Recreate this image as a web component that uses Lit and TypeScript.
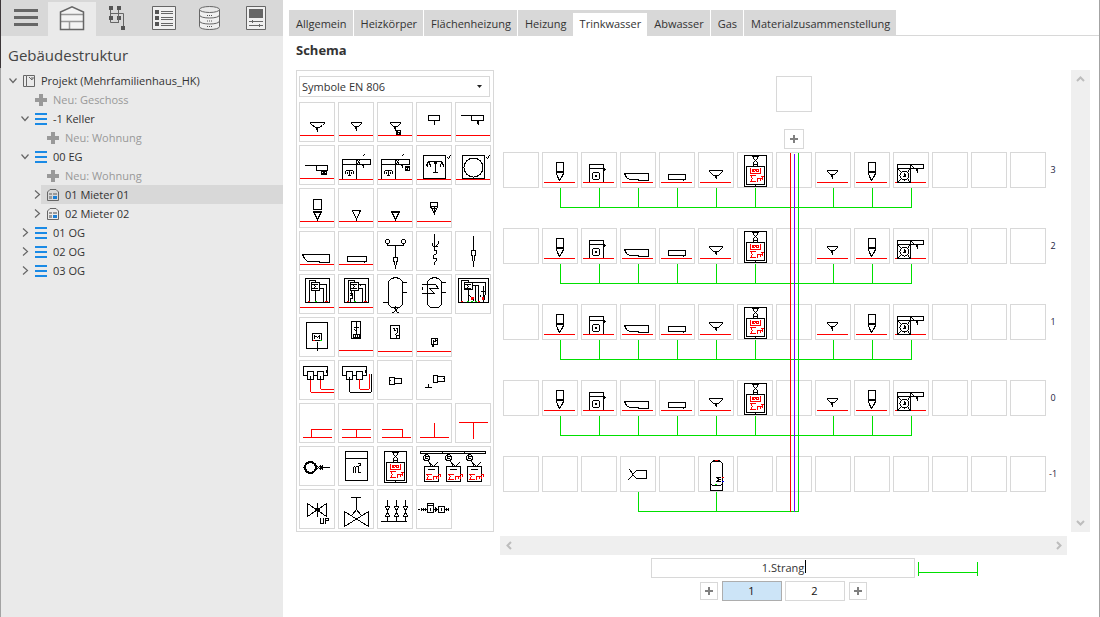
import { LitElement, html, css, svg, nothing } from "lit";
import type { SVGTemplateResult } from "lit";
import { customElement, state } from "lit/decorators.js";
import { classMap } from "lit/directives/class-map.js";

type Art = SVGTemplateResult | SVGTemplateResult[];

/* Line helpers: one-pixel strokes on a cell-sized grid. */
const k = (d: string) => svg`<path class="k" d=${d}></path>`;
const kk = (d: string) => svg`<path class="k bold" transform="translate(-.5 -.5)" d=${d}></path>`;
const r = (d: string) => svg`<path class="r" d=${d}></path>`;
const g = (d: string) => svg`<path class="g" d=${d}></path>`;
const b = (d: string) => svg`<path class="b" d=${d}></path>`;
const move = (x: number, y: number, art: Art) => svg`<g transform="translate(${x} ${y})">${art}</g>`;

const floor = r("M1 33H34");
const floorLow = r("M1 34H34");
const base = r("M2 30H32");

const basin = [k("M11 20H25M11 20V21L13 23L15 24L16 25H20L21 24L23 23L25 21V20M18 25V29M17 25V27")];
const basinSmall = [k("M13 20H23M13 20V21L14 22L16 24H20L22 22L23 21V20M18 24V28M17 25V26")];
const tub = k("M3 23H30V31H20V30H8L5 27L3 23");
const tray = k("M9 25H28V30H9ZM26 30V31");
const scale = k("M7 26L8 25H14L15 26M11 25V30M7 27V28M15 27V28M9 27V28M13 27V28M10 30H12");
const sigma = k("M13 10H18M14 10L16 12L14 14M13 14H18");
const sumRed = r("M6 28H1L3 30L1 33H6M8 33V30H11V32M11 30H13V32M13 28H15V30");

const meter: Art = [
  k("M7 5H29V36H7Z"),
  k("M9 16H27V34H9Z"),
  k("M15 6H21M16 8L20 12M20 8L16 12M16 6V8M20 6V8M16 12V15M20 12V15M16 14H20M18 34V36"),
  r("M13 18V23H23V18M15 19H21M15 21H17M19 21H21M15 20H16M18 20H19M21 20H21"),
  r("M18 25H13L15 28L13 31H18M20 31V28H23V30M23 28H24M25 26V29M24 26H26"),
];

const heatBox = [
  k("M6 4H30V28H6Z"),
  k("M12 8H20V16H12Z"),
  sigma,
  k("M10 28V6H16V8M16 16V28M20 10H27V28M20 14H24V28"),
  r("M9 27H10M26 27H28"),
  g("M16 27H17"),
];

const waterUnit = [
  svg`<circle class="k" cx="10" cy="11" r="3"></circle>`,
  k("M9 9V12M10 10H12M9 12H11M8 14H11M11 14L16 19M13 17L15 20M21 16L17 20M8 20H22V35H8ZM12 23H18"),
  move(9, 0, sumRed),
];

const ART: Record<string, Art> = {
  basin: [basin, floor].flat(),
  basinSmall: [basinSmall, floor].flat(),
  basinHeater: [...basinSmall, k("M19 28H23V32H19ZM20 29V32M20 32H23M22 30V31M19 30H21"), floor],
  sinkBox: [k("M12 13H23V18H12ZM18 18V22"), floor],
  sinkDrain: [k("M6 13H28V18H16V13M23 18V22M22 18V21"), floor],
  sinkHeater: [k("M6 20H28V25H17V20M22 25V29M22 26H27M23 28H27M24 27H25M27 25V29M22 29H27"), floor],
  kitchenScale: [k("M4 14H32V19H4ZM4 19V34M18 14V34M19 15L22 19M21 15L19 18M25 10V10M26 9H26M25 20V22M24 19V20"), scale, floorLow],
  kitchenScaleHeater: [k("M4 14H32V19H4ZM4 19V34M18 14V34M19 15L22 19M21 15L19 18M25 10V10M26 9H26M25 20V22M24 19V20M28 21H32V25H28ZM28 22H32M28 24H30M30 23V24"), scale, floorLow],
  dishwasher: [k("M7 10H29V33H7ZM13 16H25M19 16V27M18 17V18M20 17V18M31 12L32 13L34 10M12 16L10 20M13 17L14 21M25 16L24 21M26 17L27 21M11 19V21M17 27H21"), floorLow],
  washer: [k("M7 10H29V33H7ZM31 12L32 13L34 10"), svg`<circle class="k" cx="18" cy="22" r="9.5"></circle>`, floorLow],
  wc: [k("M14 11H22V21H14ZM14 23H22L18 31ZM15 24H21"), floor],
  cone: [k("M14 22H22L18 31Z"), floor],
  coneSolid: [k("M14 23H22L18 31ZM14 24H22"), floor],
  urinal: [k("M14 14H21V18H14ZM14 18L18 25L21 18M16 20H20M18 18V23"), floor],
  tub: [tub, floor],
  tray: [tray, floor],
  mixer: [svg`<circle class="k" cx="10" cy="10" r="2"></circle>`, svg`<circle class="k" cx="26" cy="10" r="2"></circle>`, k("M10 12V14H26V12M18 14V26M16 26H20V29L19 31V33M16 26V29L17 31V33M18 34V37")],
  hose: [k("M18 3V14M16 12V14L18 16L22 12M18 15V19H20V22L17 24V27H20V29L18 31V33M22 10V12M20 15H21")],
  lance: [k("M18 5V19M16 19H20V23L19 25V29M16 19V23L17 25V29M18 30V35")],
  heatStation: [...heatBox, floor],
  heatStationPump: [...heatBox, k("M13 16V20M12 19H14V24H12V28M12 21H13M22 10V11"), floor],
  tank: [k("M11 7L14 4H16V3H20V4H22L25 7V30L22 33H20M16 33H14L11 30V7M25 8H29M25 18H29M6 28H11M17 34L20 38M20 34L16 38M16 33H20M18 32V35M15 38H15M21 38H21")],
  tankCoil: [k("M11 7L14 4H16V3H20V4H22L25 7V30L22 33H14L11 30ZM25 8H29M25 18H29M6 10H19L22 14H13L18 19H6M6 13V15")],
  heatStationDouble: [
    k("M3 4H33V28H3ZM9 8H17V15H9Z"),
    move(-3, 0, sigma),
    k("M6 28V6H13V8M17 8H30V17M17 11H23V28M20 11V26M13 16V28M28 12V22M26 17H30V20M28 25V28"),
    svg`<rect class="fr" x="15" y="22" width="3" height="3"></rect><rect class="fr" x="26" y="22" width="3" height="3"></rect>`,
    k("M14 21L15 22M18 25V26M25 21V22M29 21V25"),
    r("M6 27H7M23 27H24"), g("M12 27H13M16 27H17M20 27H21"),
  ],
  boiler: [k("M7 5H28V31H7ZM13 16H22V23H13ZM18 25V33M15 21V18L18 20L20 18V21"), r("M14 23H15"), g("M21 23H22")],
  heaterTall: [k("M13 4H22V21H13ZM18 5V16M16 10H20M16 12L18 14M15 17H21V20H15ZM17 18V19M19 18V19"), floor],
  heaterMid: [k("M13 8H22V21H13ZM16 11H17V13M19 11H20V15L18 17M18 13V13M19 18H22V21H19Z"), floorLow],
  heaterSmall: [k("M15 21H21V27H15ZM16 27V29H17V27M17 23V26M19 22V24M17 25L20 23"), floorLow],
  manifold: [k("M4 6H28V15H24M4 6V15H8M14 15H18M8 11H14V19H8ZM18 11H24V19H18ZM27 10V12M11 16V19M21 16V19"), r("M11 20V31L12 32H34M21 20V28L22 29H34")],
  manifoldLoop: [k("M4 6H28V15H24M4 6V15H8M14 15H18M8 11H14V19H8ZM18 11H24V19H18ZM27 10V12M11 17V31L12 32H32L33 31V14"), r("M21 19V28L22 29H30L31 28V14")],
  outlet: [k("M12 17H17V24H12ZM17 18H24V23H17ZM13 20V20")],
  outletFloor: [k("M17 15H21V22H17ZM21 16H28V21H21ZM27 18V18M9 27H15M12 24V27")],
  pipeRight: [r("M4 34H32M12 34V26H32")],
  pipeBoth: [r("M4 34H32M4 26H32M18 26V34")],
  pipeLeft: [r("M5 34H33M5 26H25V34")],
  teeUp: [r("M4 34H32M18 20V34")],
  teeDown: [r("M4 19H32M18 19V35")],
  pump: [svg`<circle class="k bold" cx="11" cy="21" r="5.500"></circle>`, k("M17 19V23M17 19L21 23M17 23L21 19M21 19V23M21 21H30M22 20V22M23 19V23M4 21H5")],
  volume: [k("M7 5H29V34H7ZM7 12H29M15 26V21M16 20L17 21V26M18 20H20V26M21 26H22M20 17H22V19H21")],
  meter,
  meterGroup: [k("M4 5H69V7H4ZM26 5V7M48 5V7"), ...waterUnit, move(22, 0, waterUnit), move(43, 0, waterUnit)],
  filterValve: [k("M8 14L27 27V14L8 27ZM18 14V27M17 19H20V22M21 29V34H24V29M26 34V29H29V31H26")],
  valve: [k("M13 8H22M18 8V20L14 25M18 20L22 25M6 22L30 37V22L6 37Z")],
  valveGroup: [0, 9, 18].map((x) => move(x, 0, k("M10 11V17M8 17H12L8 27H12ZM10 27V32M9 20H11M9 24H11"))).concat(k("M4 32H29")),
  chain: [k("M2 20H3M5 19V21M7 19V21M9 19V21M5 20H11M11 14H17V23H11ZM11 16H17M14 19V21M17 20H22M19 18V22M20 19V21M22 17H28V23H22ZM25 19V21M28 20H32M30 19V21M32 19V21")],

  cWc: [k("M14 10H21V20H14ZM14 19H21M14 21L15 24L17 28L19 25L21 21"), base],
  cMachine: [base, k("M8 29V12H22V29M8 16H22M22 16L24 17M23 18V18M12 20H17L18 21V26L17 27H12L11 26V21ZM14 23H15V24H14Z")],
  cTub: [k("M4 21H28V28H18V27H9L6 25L4 21"), base],
  cTray: [k("M9 22H26V27H9ZM24 27V28"), base],
  cBasin: [move(-0, -2, k("M11 20H24M11 20V21L13 23L14 24L15 25H20L21 24L22 23L24 21V20M18 25V28M17 26V27")), base],
  cBasinSmall: [move(-1, -2, basinSmall), base],
  cMeter: move(0, -2, meter),
  cWasherTop: [base, k("M4 12H30V16H4ZM4 16V30H17V12M5 17L8 20M16 17L14 20M5 29L8 26M16 29L14 26M18 13L21 16"), svg`<circle class="k" cx="11" cy="23" r="4.500"></circle>`, k("M11 21V24H10M12 22V24M24 16V20M23 17V18")],
  cOutlet: [k("M26 14H16L12 18L16 22H26ZM9 13L12 17V19L8 23")],
  cTank: [k("M12 34V7L14 5H22L24 7V34ZM12 28L15 29H21L24 28M15 4H21M18 21H22M19 22L21 23L19 24M18 25H22"), r("M17 4H19M24 21H25"), b("M24 25H25"), g("M17 28H18")],
};

const artStyles = css`
  .art { display: block; shape-rendering: crispEdges; overflow: visible; }
  .k, .r, .g, .b { fill: none; stroke: #000; stroke-width: 1; stroke-linecap: square; }
  .bold { stroke-width: 2; }
  .r { stroke: #f00; }
  .g { stroke: #00e000; }
  .b { stroke: #00f; }
  .fr { fill: #f00; }
`;

const drawing = (name: string, w: number, h: number) => svg`
  <svg class="art" width=${w} height=${h} viewBox="0 0 ${w} ${h}" aria-hidden="true">
    <g transform="translate(.5 .5)">${ART[name]}</g>
  </svg>`;

const reset = css`
  :host { box-sizing: border-box; }
  *, *::before, *::after { box-sizing: border-box; }
  button, input, select { font: inherit; color: inherit; margin: 0; padding: 0; border: 0; border-radius: 0; background: none; }
  ul { list-style: none; margin: 0; padding: 0; }
`;

/* ---------- Sidebar ---------- */

interface TreeRow { level: number; kind: "project" | "floor" | "flat" | "add"; label: string; open?: boolean; selected?: boolean; }

const TREE: TreeRow[] = [
  { level: 0, kind: "project", label: "Projekt (Mehrfamilienhaus_HK)", open: true },
  { level: 1, kind: "add", label: "Neu: Geschoss" },
  { level: 1, kind: "floor", label: "-1 Keller", open: true },
  { level: 2, kind: "add", label: "Neu: Wohnung" },
  { level: 1, kind: "floor", label: "00 EG", open: true },
  { level: 2, kind: "add", label: "Neu: Wohnung" },
  { level: 2, kind: "flat", label: "01 Mieter 01", open: false, selected: true },
  { level: 2, kind: "flat", label: "02 Mieter 02", open: false },
  { level: 1, kind: "floor", label: "01 OG", open: false },
  { level: 1, kind: "floor", label: "02 OG", open: false },
  { level: 1, kind: "floor", label: "03 OG", open: false },
];

const TREE_ICONS = {
  project: svg`<path d="M.5 1.5H3.5V12.5H.5ZM3.5 1.5H11.5V12.5H3.5M6 3L9 6V3M9 5.5L11.5 3" fill="none" stroke="#666"></path>`,
  floor: svg`<path d="M0 1H12V3H0ZM0 6H12V8H0ZM0 11H12V13H0Z" fill="#1a8ae5"></path>`,
  flat: svg`<path d="M.5 12.5V4L3 1.5H9L11.5 4V12.5Z" fill="none" stroke="#666"></path><path d="M2 5H5V7H2ZM6 5H10V7H6ZM2 8H5V11H2Z" fill="#999"></path><path d="M6 8H10V11H6Z" fill="#1a7fd6"></path>`,
  add: svg`<path d="M4 1H8V5H12V9H8V13H4V9H0V5H4Z" fill="#999"></path>`,
};

const TOOLS = [
  { id: "menu", label: "Menü", art: svg`<path d="M1 3H25V6H1ZM1 10H25V13H1ZM1 17H25V20H1Z" fill="#666"></path>` },
  { id: "building", label: "Gebäude", art: svg`<path d="M.5 23.500V6L12 .8L23.500 6V23.500Z" fill="#f4f4f4"></path><path d="M1 8.500H23M1 15.500H23M9.500 15.500V23" stroke="#999" stroke-width="1.500"></path><path d="M.5 23.500V6L12 .8L23.500 6V23.500Z" fill="none" stroke="#666" stroke-width="1.500"></path>` },
  { id: "tree", label: "Netz", art: svg`<path d="M2 0H6V4H2ZM10 0H14V4H10ZM2 10H6V14H2ZM10 10H14V14H10ZM14 20H18V24H14Z" fill="#555"></path><path d="M3.500 4V10M11.500 4V16.500M3.500 7.500H16.500V20M3.500 14V16.500H12" fill="none" stroke="#666"></path>` },
  { id: "list", label: "Liste", art: svg`<g transform="translate(-1 0)"><path d="M.5 .5H23.500V23.500H.5Z" fill="#f0f0f0" stroke="#666"></path><path d="M3 4H7V8H3ZM3 10H7V14H3ZM3 16H7V20H3Z" fill="#555"></path><path d="M9 5.500H21M9 7.500H21M9 11.500H21M9 13.500H21M9 17.500H21M9 19.500H21" stroke="#666"></path></g>` },
  { id: "data", label: "Datenbank", art: svg`<path d="M.5 3.500V20.500C.5 24.500 20.500 24.500 20.500 20.500V3.500" fill="#f0f0f0" stroke="#666"></path><ellipse cx="10.500" cy="3.500" rx="10" ry="3" fill="#e8e8e8" stroke="#666"></ellipse><path d="M.5 9C.5 13 20.500 13 20.500 9M.5 15C.5 19 20.500 19 20.500 15" fill="none" stroke="#666"></path><path d="M8 9.500H9M10 9.500H11M12 9.500H13M8 15H9M10 15H11M12 15H13M8 20.500H9M10 20.500H11M12 20.500H13" stroke="#555"></path>` },
  { id: "report", label: "Bericht", art: svg`<path d="M1.500 .5H20.500V23.500H1.500Z" fill="#f0f0f0" stroke="#666"></path><path d="M4 3H18V12H4Z" fill="#666"></path><path d="M4 15.500H18M4 19.500H18M7.500 14V17M14.500 18V21" stroke="#666"></path>` },
];

@customElement("structure-sidebar")
class StructureSidebar extends LitElement {
  @state() private active = "building";

  static styles = [reset, css`
    :host { display: block; width: 283px; flex: none; padding-left: 1px; background: linear-gradient(#3c3638 0 68px, #a3a3a3 68px) 0 0 / 1px 100% no-repeat #eaeaea; }
    .tools { display: flex; height: 36px; background: #d8d8d8; padding-left: 1px; }
    .tool { width: 46px; height: 36px; display: grid; place-items: center; }
    .tool svg { display: block; overflow: visible; }
    .tool.on { width: 48px; height: 34px; margin-top: 2px; padding-bottom: 2px; background: #eaeaea; }
    h1 { margin: 0; padding: 8px 7px 5px; font-size: 15px; line-height: 22px; font-weight: 400; color: #444; }
    .row { display: flex; align-items: center; height: 19px; }
    .pad0 { padding-left: 8px; }
    .pad1 { padding-left: 20px; }
    .pad2 { padding-left: 32px; }
    .toggle { width: 8px; height: 19px; display: grid; place-items: center; }
    .toggle svg { display: block; }
    .entry { flex: 1; min-width: 0; height: 19px; display: flex; align-items: center; gap: 6px; padding-left: 6px; text-align: left; white-space: nowrap; color: #333; }
    .entry svg { display: block; flex: none; }
    .entry.add { color: #999; margin-left: 8px; }
    .entry.sel { background: #d8d8d8; }
  `];

  render() {
    return html`
      <nav class="tools">
        ${TOOLS.map((t) => html`<button class=${classMap({ tool: true, on: t.id === this.active })} aria-label=${t.label} @click=${() => (this.active = t.id)}>
          <svg width="24" height="24" viewBox="0 0 24 24">${t.art}</svg></button>`)}
      </nav>
      <h1>Gebäudestruktur</h1>
      <ul>
        ${TREE.map((n) => html`<li class="row pad${n.level}">
          ${n.kind === "add" ? nothing : html`<button class="toggle" aria-label="Auf- oder zuklappen" aria-expanded=${n.open ? "true" : "false"}>
            <svg width="8" height="10" viewBox="0 0 8 10"><path d=${n.open ? "M.5 2.500L4 6.500L7.500 2.500" : "M2 .5L6.500 4.500L2 8.500"} fill="none" stroke="#666" stroke-width="1.200"></path></svg>
          </button>`}
          <button class=${classMap({ entry: true, add: n.kind === "add", sel: !!n.selected })}>
            <svg width="12" height="14" viewBox="0 0 12 14">${TREE_ICONS[n.kind]}</svg>${n.label}
          </button></li>`)}
      </ul>`;
  }
}

/* ---------- Symbol palette ---------- */

const PALETTE: string[][] = [
  ["basin", "basinSmall", "basinHeater", "sinkBox", "sinkDrain"],
  ["sinkHeater", "kitchenScale", "kitchenScaleHeater", "dishwasher", "washer"],
  ["wc", "cone", "coneSolid", "urinal"],
  ["tub", "tray", "mixer", "hose", "lance"],
  ["heatStation", "heatStationPump", "tank", "tankCoil", "heatStationDouble"],
  ["boiler", "heaterTall", "heaterMid", "heaterSmall"],
  ["manifold", "manifoldLoop", "outlet", "outletFloor"],
  ["pipeRight", "pipeBoth", "pipeLeft", "teeUp", "teeDown"],
  ["pump", "volume", "meter", "meterGroup"],
  ["filterValve", "valve", "valveGroup", "chain"],
];

@customElement("symbol-palette")
class SymbolPalette extends LitElement {
  static styles = [reset, artStyles, css`
    :host { display: block; border: 1px solid #d8d8d8; padding: 5px 2px 2px; }
    .pick { position: relative; margin-right: 1px; }
    select { display: block; width: 100%; height: 21px; appearance: none; border: 1px solid #d8d8d8; padding: 0 20px 0 2px; background: #fff; font-size: 11px; color: #333; }
    .caret { position: absolute; right: 8px; top: 9px; pointer-events: none; display: block; }
    .rows { display: grid; gap: 3px; margin-top: 5px; }
    .line { display: flex; gap: 3px; }
    .cell { width: 36px; height: 40px; box-shadow: inset 0 0 0 1px #d8d8d8; background: #fff; }
    .cell.wide { width: 75px; }
  `];

  render() {
    return html`
      <div class="pick">
        <select aria-label="Symbolsatz"><option>Symbole EN 806</option></select>
        <svg class="caret" width="5" height="3" viewBox="0 0 5 3"><path d="M0 0H5L2.500 3Z" fill="#222"></path></svg>
      </div>
      <div class="rows">
        ${PALETTE.map((line) => html`<div class="line">${line.map((name) => {
          const wide = name === "meterGroup";
          return html`<button class=${classMap({ cell: true, wide })} aria-label=${name}>${drawing(name, wide ? 75 : 36, 40)}</button>`;
        })}</div>`)}
      </div>`;
  }
}

/* ---------- Riser diagram ---------- */

const COLS = 14;
const PITCH = 39;
const FLOOR_SLOTS: Record<number, string> = {
  1: "cWc", 2: "cMachine", 3: "cTub", 4: "cTray", 5: "cBasin", 6: "cMeter", 8: "cBasinSmall", 9: "cWc", 10: "cWasherTop",
};
const FLOORS = [
  { label: "3", slots: FLOOR_SLOTS },
  { label: "2", slots: FLOOR_SLOTS },
  { label: "1", slots: FLOOR_SLOTS },
  { label: "0", slots: FLOOR_SLOTS },
  { label: "-1", slots: { 3: "cOutlet", 5: "cTank" } as Record<number, string> },
];

const plus = svg`<svg width="8" height="8" viewBox="0 0 8 8"><path d="M3 0H5V3H8V5H5V8H3V5H0V3H3Z" fill="#808080"></path></svg>`;

@customElement("riser-diagram")
class RiserDiagram extends LitElement {
  static styles = [reset, artStyles, css`
    :host { display: block; overflow: hidden; padding: 6px 0 0 3px; }
    .sheet { position: relative; width: max-content; display: grid; }
    .head { display: grid; justify-items: center; width: 36px; margin-left: 273px; gap: 17px; }
    .slot { width: 36px; height: 36px; box-shadow: inset 0 0 0 1px #d8d8d8; background: #fff; }
    .add { width: 20px; height: 20px; border: 1px solid #d8d8d8; display: grid; place-items: center; }
    .add svg { display: block; }
    .storeys { position: relative; display: grid; gap: 20px; margin-top: 3px; }
    .storey { display: grid; grid-template-columns: auto auto; column-gap: 3px; }
    .slots { display: flex; gap: 3px; }
    .label { align-self: center; font-size: 9px; line-height: 12px; color: #1b2340; }
    .pipes, .risers { display: block; shape-rendering: crispEdges; }
    .risers { position: absolute; left: 0; top: 1px; pointer-events: none; }
    .v { stroke: #7a00ff; fill: none; }
  `];

  private pipes(slots: Record<number, string>) {
    const xs = Object.keys(slots).map((c) => Number(c) * PITCH + 18);
    const drops = xs.map((x) => `M${x} 0V19`).join("");
    const end = Math.max(295, ...xs);
    return svg`<svg class="pipes" width="543" height="20" viewBox="0 0 543 20"><path class="g" transform="translate(.5 .5)" d="${drops}M${xs[0]} 19H${end}"></path></svg>`;
  }

  render() {
    return html`<div class="sheet">
      <div class="head">
        <button class="slot" aria-label="Kopfsymbol"></button>
        <button class="add" aria-label="Geschoss hinzufügen">${plus}</button>
      </div>
      <div class="storeys">
        ${FLOORS.map((f) => html`<div class="storey">
          <div class="slots">${Array.from({ length: COLS }, (_, c) => html`<button class="slot" aria-label="Platz ${c + 1}">${f.slots[c] ? drawing(f.slots[c], 36, 36) : nothing}</button>`)}</div>
          <span class="label">${f.label}</span>
          ${this.pipes(f.slots)}
        </div>`)}
        <svg class="risers" width="543" height="360" viewBox="0 0 543 360"><g transform="translate(.5 .5)">
          ${r("M287 0V358")}<path class="v" d="M291 0V358"></path>${g("M295 0V358")}</g></svg>
      </div>
    </div>`;
  }
}

/* ---------- Application ---------- */

const TABS = ["Allgemein", "Heizkörper", "Flächenheizung", "Heizung", "Trinkwasser", "Abwasser", "Gas", "Materialzusammenstellung"];

const arrow = (d: string) => svg`<svg width="9" height="9" viewBox="0 0 9 9"><path d=${d} fill="none" stroke="#bdbdbd" stroke-width="2"></path></svg>`;

@customElement("app-root")
class AppRoot extends LitElement {
  @state() private tab = "Trinkwasser";
  @state() private riser = 1;

  static styles = [reset, artStyles, css`
    :host { display: flex; min-height: 100vh; background: #fff; border-right: 1px solid #a3a3a3; font-family: "Open Sans", "Noto Sans", sans-serif; font-size: 11px; color: #333; }
    main { flex: 1; min-width: 0; display: flex; flex-direction: column; }
    .tabs { display: flex; height: 26px; margin-top: 10px; padding-left: 6px; }
    .tab { padding: 2px 6px 0 7px; background: #d8d8d8; margin-right: 1px; white-space: nowrap; line-height: 20px; }
    .tab.on { background: #fff; border-top: 3px solid #d8d8d8; margin: 0 0 0 -1px; padding-top: 0; padding-bottom: 1px; }
    .tab:last-of-type { margin-right: 0; }
    .rest { flex: 1; border-bottom: 1px solid #d8d8d8; }
    h2 { margin: 0; padding: 4px 13px 10px; font-size: 13px; line-height: 20px; font-weight: 700; }
    .work { display: grid; grid-template-columns: 198px minmax(0, 1fr) 19px; padding: 0 9px 0 13px; }
    riser-diagram { margin: 0 4px 0 6px; }
    .bar { background: #efefef; display: flex; justify-content: space-between; }
    .bar button { width: 18px; height: 19px; display: grid; place-items: center; }
    .bar svg { display: block; }
    .bar.vert { flex-direction: column; }
    .bar.horz { grid-column: 2; margin: 4px 4px 0 6px; height: 19px; }
    .foot { grid-column: 2; margin: 3px 5px 0 6px; display: grid; grid-template-columns: 1fr auto 1fr; gap: 3px; }
    .name { grid-column: 2; position: relative; }
    .name input { display: block; width: 264px; height: 20px; border: 1px solid #d8d8d8; text-align: center; background: #fff; padding-bottom: 2px; }
    .cursor { position: absolute; left: calc(50% + 22px); top: 2px; width: 1px; height: 13px; background: #000; }
    .gauge { display: block; shape-rendering: crispEdges; margin-top: 4px; }
    .pages { grid-column: 2; justify-self: center; display: flex; align-items: center; gap: 4px; }
    .page { width: 60px; height: 20px; border: 1px solid #d8d8d8; color: #111; line-height: 18px; }
    .page.on { background: #cce4f7; border-color: #adadad; }
    .page + .page { margin-left: -1px; }
    .add { width: 18px; height: 18px; border: 1px solid #d8d8d8; display: grid; place-items: center; }
    .add svg { display: block; }
  `];

  render() {
    return html`
      <structure-sidebar></structure-sidebar>
      <main>
        <nav class="tabs">
          ${TABS.map((t) => html`<button class=${classMap({ tab: true, on: t === this.tab })} @click=${() => (this.tab = t)}>${t}</button>`)}
          <span class="rest"></span>
        </nav>
        <h2>Schema</h2>
        <section class="work">
          <symbol-palette></symbol-palette>
          <riser-diagram></riser-diagram>
          <div class="bar vert">
            <button aria-label="Nach oben">${arrow("M1 6L4.500 2.500L8 6")}</button>
            <button aria-label="Nach unten">${arrow("M1 3L4.500 6.500L8 3")}</button>
          </div>
          <div class="bar horz">
            <button aria-label="Nach links">${arrow("M6 1L2.500 4.500L6 8")}</button>
            <button aria-label="Nach rechts">${arrow("M3 1L6.500 4.500L3 8")}</button>
          </div>
          <div class="foot">
            <div class="name"><input aria-label="Strangname" .value=${"1.Strang"} /><span class="cursor"></span></div>
            <svg class="gauge" width="60" height="14" viewBox="0 0 60 14"><path class="g" transform="translate(.5 .5)" d="M0 0V13M59 0V13M0 10H59"></path></svg>
            <div class="pages">
              <button class="add" aria-label="Strang davor einfügen">${plus}</button>
              ${[1, 2].map((n) => html`<button class=${classMap({ page: true, on: this.riser === n })} @click=${() => (this.riser = n)}>${n}</button>`)}
              <button class="add" aria-label="Strang danach einfügen">${plus}</button>
            </div>
          </div>
        </section>
      </main>`;
  }
}
